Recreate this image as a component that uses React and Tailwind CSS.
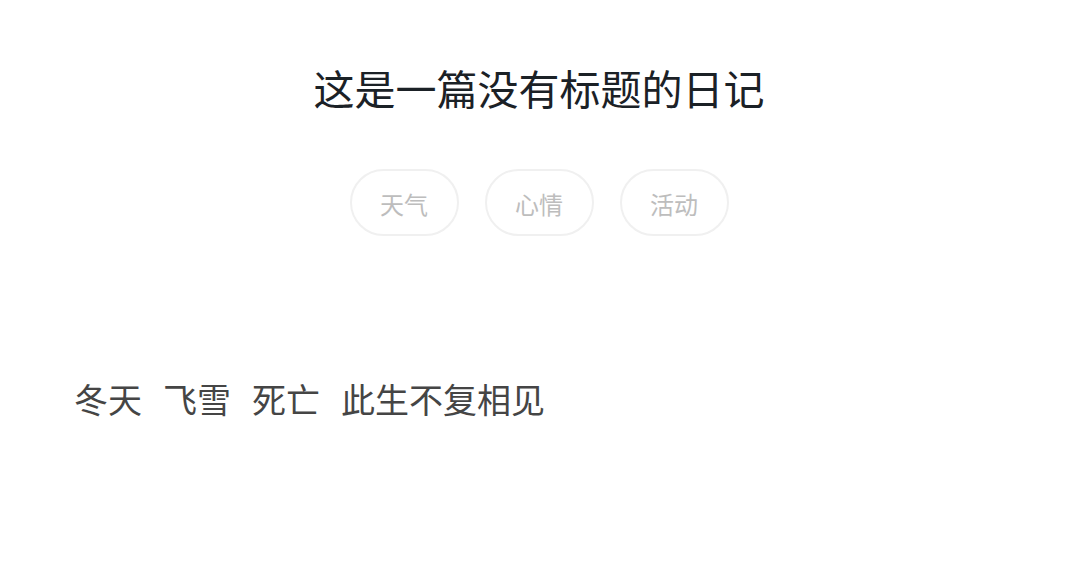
import React from "react";

const tags = ["天气", "心情", "活动"];
const words = ["冬天", "飞雪", "死亡", "此生不复相见"];

export default function App() {
  return (
    <div
      className="w-[1078px] h-[579px] bg-white overflow-hidden"
      style={{ fontFamily: '"Noto Sans CJK SC", "Noto Sans", sans-serif' }}
    >
      {/* Title */}
      <h1 className="pt-[59px] text-center text-[41px] leading-[56px] text-[#1b2126] font-normal">
        这是一篇没有标题的日记
      </h1>

      {/* Tags */}
      <div className="mt-[54px] flex justify-center gap-[26px]">
        {tags.map((t) => (
          <span
            key={t}
            className="w-[109px] h-[67px] pt-[3px] rounded-full border-2 border-[#f0f0f0] flex items-center justify-center text-[24px] text-[#bdbdbd]"
          >
            {t}
          </span>
        ))}
      </div>

      {/* Body */}
      <div className="mt-[141px] pl-[74px] flex gap-[21px] text-[34px] leading-[44px] text-[#454545]">
        {words.map((w) => (
          <span key={w}>{w}</span>
        ))}
      </div>
    </div>
  );
}
